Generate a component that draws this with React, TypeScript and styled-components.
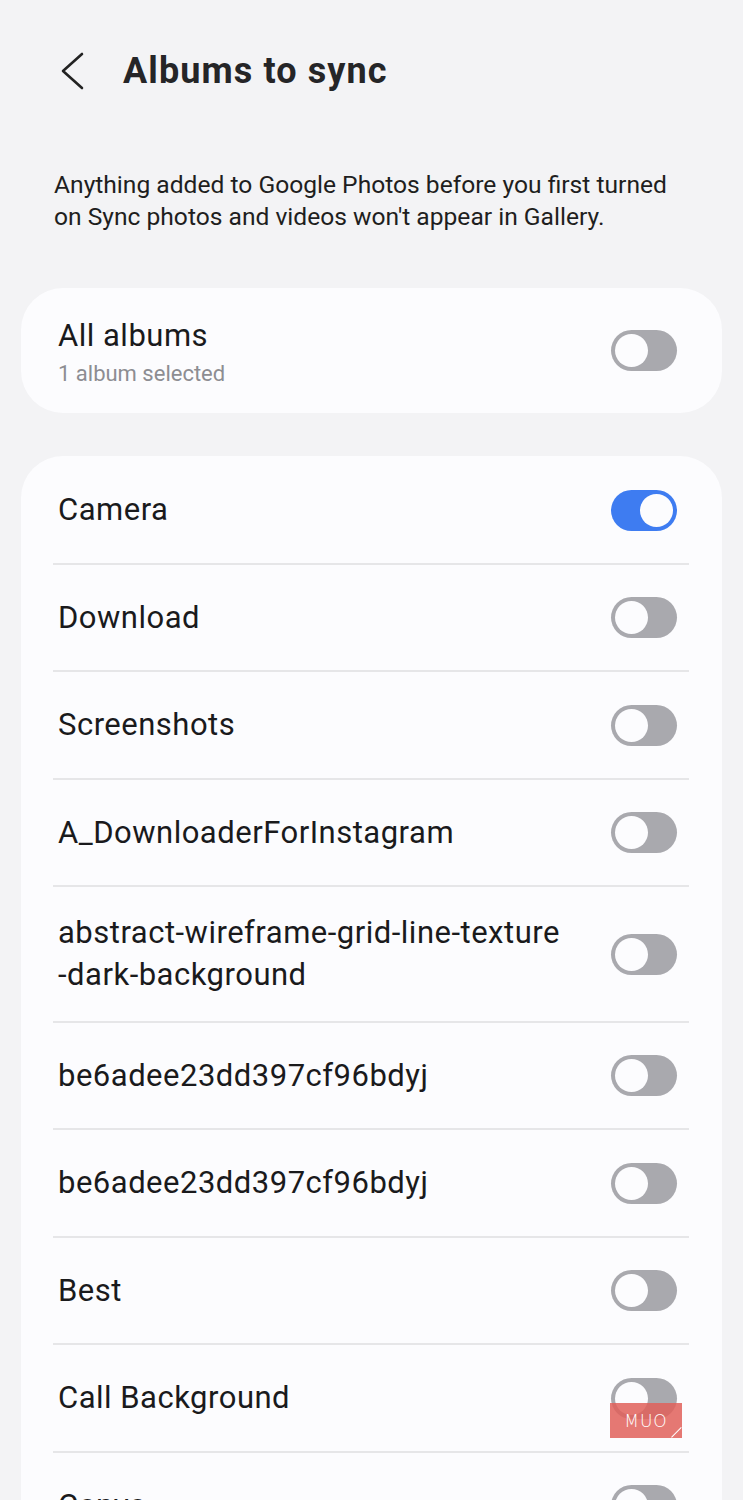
import React from "react";
import styled, { createGlobalStyle } from "styled-components";

const Global = createGlobalStyle`
  html, body { margin: 0; padding: 0; background: #f3f3f5; }
  body { font-family: Roboto, "Noto Sans", Arial, sans-serif; color: #1c1c1e; -webkit-font-smoothing: antialiased; }
  * { box-sizing: border-box; }
`;

const Page = styled.div`
  position: relative;
  width: 743px;
  height: 1500px;
  overflow: hidden;
  padding: 53px 21px 0 21px;
`;

const Header = styled.header`
  display: flex;
  align-items: center;
  height: 36px;
  padding-left: 38px;
  gap: 38px;
`;

const BackButton = styled.button`
  border: 0;
  background: none;
  padding: 0;
  width: 26px;
  height: 36px;
  display: flex;
  align-items: center;
  justify-content: center;
  color: #222;
`;

const Title = styled.h1`
  margin: 0;
  font-size: 36px;
  font-weight: 700;
  letter-spacing: 1.1px;
  color: #252527;
`;

const Description = styled.p`
  margin: 80px 0 0 0;
  padding: 0 33px;
  font-size: 24.6px;
  line-height: 32px;
  color: #1e1e20;
`;

const Card = styled.section<{ $top: number }>`
  background: #fcfcfe;
  border-radius: 42px;
  margin-top: ${(p) => p.$top}px;
`;

const SummaryCard = styled(Card)`
  height: 125px;
  display: flex;
  align-items: center;
  justify-content: space-between;
  padding: 0 45px 0 37px;
`;

const ListCard = styled(Card)`
  padding: 1px 33px 0 32px;
`;

const TextBlock = styled.div`
  display: flex;
  flex-direction: column;
`;

const Label = styled.div`
  font-size: 31px;
  letter-spacing: 0.5px;
  line-height: 42px;
  color: #1a1a1c;
  max-width: 540px;
`;

const SubLabel = styled.div`
  font-size: 22px;
  line-height: 26px;
  color: #8d8d92;
  margin-top: 4px;
`;

const Row = styled.div<{ $tall?: boolean }>`
  display: flex;
  align-items: center;
  justify-content: space-between;
  min-height: ${(p) => (p.$tall ? 135.5 : 107.5)}px;
  padding: 1px 12px 0 5px;
  border-bottom: 2px solid #e6e6e8;
`;

const Track = styled.div<{ $on: boolean }>`
  flex: none;
  width: 66px;
  height: 41px;
  border-radius: 21px;
  background: ${(p) => (p.$on ? "#3e7cf1" : "#a9a9ae")};
  display: flex;
  align-items: center;
  justify-content: ${(p) => (p.$on ? "flex-end" : "flex-start")};
  padding: 0 4px;
`;

const Knob = styled.div`
  width: 33px;
  height: 33px;
  border-radius: 50%;
  background: #fcfcfe;
`;

const Watermark = styled.div`
  position: absolute;
  left: 610px;
  top: 1403px;
  width: 72px;
  height: 35px;
  background: rgba(224, 96, 90, 0.85);
  color: #fff;
  font-family: "DejaVu Sans", sans-serif;
  font-size: 17px;
  font-weight: 300;
  letter-spacing: 1px;
  display: flex;
  align-items: center;
  justify-content: center;
  overflow: hidden;
`;

const Corner = styled.div`
  position: absolute;
  right: -6px;
  bottom: -6px;
  width: 14px;
  height: 14px;
  border-top: 1.5px solid #fff;
  transform: rotate(-45deg);
`;

const Toggle = ({ on }: { on: boolean }) => (
  <Track $on={on}>
    <Knob />
  </Track>
);

const albums: { name: string; on?: boolean; tall?: boolean }[] = [
  { name: "Camera", on: true },
  { name: "Download" },
  { name: "Screenshots" },
  { name: "A_DownloaderForInstagram" },
  { name: "abstract-wireframe-grid-line-texture-dark-background", tall: true },
  { name: "be6adee23dd397cf96bdyj" },
  { name: "be6adee23dd397cf96bdyj" },
  { name: "Best" },
  { name: "Call Background" },
  { name: "Canva" },
  { name: "Facebook" },
];

export default function App() {
  return (
    <>
      <Global />
      <Page>
        <Header>
          <BackButton aria-label="Back">
            <svg width="26" height="38" viewBox="0 0 26 38" fill="none">
              <path d="M23 2 L4 19 L23 36" stroke="#222" strokeWidth="2.6" strokeLinecap="round" strokeLinejoin="round" />
            </svg>
          </BackButton>
          <Title>Albums to sync</Title>
        </Header>
        <Description>
          Anything added to Google Photos before you first turned on Sync photos and videos won't appear in Gallery.
        </Description>
        <SummaryCard $top={55}>
          <TextBlock>
            <Label>All albums</Label>
            <SubLabel>1 album selected</SubLabel>
          </TextBlock>
          <Toggle on={false} />
        </SummaryCard>
        <ListCard $top={43}>
          {albums.map((a, i) => (
            <Row key={i} $tall={a.tall}>
              <Label>{a.tall ? <>abstract-wireframe-grid-line-texture<br />-dark-background</> : a.name}</Label>
              <Toggle on={!!a.on} />
            </Row>
          ))}
        </ListCard>
        <Watermark>
          MUO
          <Corner />
        </Watermark>
      </Page>
    </>
  );
}
